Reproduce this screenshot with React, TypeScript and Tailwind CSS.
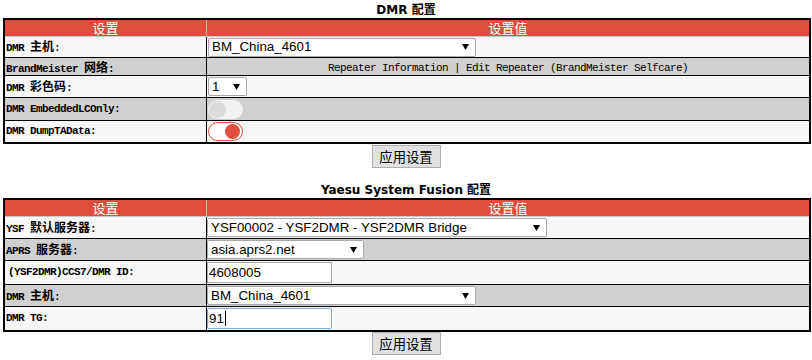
import type { ReactNode } from 'react';

const mono = "font-['Liberation_Mono','Noto_Sans_CJK_SC',monospace]";
const sans = "font-['Liberation_Sans','Noto_Sans_CJK_SC',sans-serif]";

function C({ children }: { children: ReactNode }) {
  return (
    <span className="font-['Noto_Sans_CJK_SC',sans-serif] text-[12px] tracking-normal">{children}</span>
  );
}

function Arrow() {
  return (
    <svg width="7" height="6" viewBox="0 0 7 6" className="shrink-0">
      <polygon points="0,0 7,0 3.5,6" fill="#000" />
    </svg>
  );
}

function Select({ value, className }: { value: string; className: string }) {
  return (
    <div
      className={`flex h-[19px] items-center justify-between rounded-[2px] border border-[#a9a9a9] bg-white pl-[3px] pr-[6px] ${sans} text-[13.33px] leading-none text-black ${className}`}
    >
      <span>{value}</span>
      <Arrow />
    </div>
  );
}

function TextInput({ value, focused }: { value: string; focused?: boolean }) {
  return (
    <div
      className={`flex h-[21px] w-[125px] items-center border bg-white px-[1px] ${sans} text-[13.33px] leading-none text-black ${
        focused ? 'rounded-[2px] border-[#7eaee6]' : 'border-[#a9a9a9]'
      }`}
    >
      <span>{value}</span>
      {focused && <span className="ml-[1px] h-[15px] w-px bg-black" />}
    </div>
  );
}

function Toggle({ on }: { on: boolean }) {
  return on ? (
    <div className="flex h-[19px] w-[35px] items-center justify-end rounded-full border border-[#df4e3c] bg-white pr-[2px]">
      <div className="h-[15px] w-[15px] rounded-full bg-[#df4e3c]" />
    </div>
  ) : (
    <div className="flex h-[19px] w-[35px] items-center rounded-full bg-[#f1f1f1] pl-[1px]">
      <div className="h-[17px] w-[17px] rounded-full bg-[#dcdcdc]" />
    </div>
  );
}

interface RowProps {
  label: ReactNode;
  children: ReactNode;
  h: string;
  dark?: boolean;
  last?: boolean;
}

function Row({ label, children, h, dark, last }: RowProps) {
  return (
    <div
      className={`grid grid-cols-[202px_1fr] ${h} ${dark ? 'bg-[#d0d0d0]' : 'bg-[#f7f7f7]'} ${
        last ? '' : 'border-b border-black'
      }`}
    >
      <div
        className={`flex items-center border-r border-black pl-[1px] ${mono} text-[11px] font-bold tracking-[-0.6px] text-black`}
      >
        {label}
      </div>
      <div className="flex items-center">{children}</div>
    </div>
  );
}

function Header() {
  return (
    <div className="grid h-[17px] grid-cols-[202px_1fr] border-b border-[#c8c8c8] bg-[#df4e3c] font-['Noto_Sans_CJK_SC',sans-serif] text-[13px] leading-[16px] text-white">
      <div className="border-r border-[#e2b0a8] text-center">设置</div>
      <div className="text-center">设置值</div>
    </div>
  );
}

function Title({ children }: { children: ReactNode }) {
  return (
    <div className="h-[16px] text-center font-['DejaVu_Sans','Noto_Sans_CJK_SC',sans-serif] text-[12px] font-bold leading-[16px] text-black">
      {children}
    </div>
  );
}

function ApplyButton() {
  return (
    <div className="flex justify-center">
      <button className="h-[23px] w-[69px] border border-[#adadad] bg-[#e1e1e1] font-['Noto_Sans_CJK_SC',sans-serif] text-[13.33px] leading-none text-black">
        应用设置
      </button>
    </div>
  );
}

export default function App() {
  return (
    <div className="h-[360px] w-[812px] overflow-hidden bg-white pt-[2px]">
      <Title>DMR 配置</Title>
      <div className="ml-[3px] w-[808px] border-2 border-black">
        <Header />
        <Row h="h-[21px]" label={<span>DMR <C>主机</C>:</span>}>
          <Select value="BM_China_4601" className="ml-[1px] w-[268px]" />
        </Row>
        <Row h="h-[18px]" dark label={<span>BrandMeister <C>网络</C>:</span>}>
          <div className={`w-full text-center ${mono} text-[11px] tracking-[-0.6px] text-black`}>
            Repeater Information | Edit Repeater (BrandMeister Selfcare)
          </div>
        </Row>
        <Row h="h-[22px]" label={<span>DMR <C>彩色码</C>:</span>}>
          <Select value="1" className="ml-[1px] w-[39px]" />
        </Row>
        <Row h="h-[23px]" dark label={<span>DMR EmbeddedLCOnly:</span>}>
          <div className="ml-[1px]">
            <Toggle on={false} />
          </div>
        </Row>
        <Row h="h-[21px]" last label={<span>DMR DumpTAData:</span>}>
          <div className="ml-[1px]">
            <Toggle on />
          </div>
        </Row>
      </div>
      <div className="mt-px">
        <ApplyButton />
      </div>

      <div className="mt-[14px]">
        <Title>Yaesu System Fusion 配置</Title>
      </div>
      <div className="ml-[3px] w-[808px] border-2 border-black">
        <Header />
        <Row h="h-[22px]" label={<span>YSF <C>默认服务器</C>:</span>}>
          <Select value="YSF00002 - YSF2DMR - YSF2DMR Bridge" className="w-[340px]" />
        </Row>
        <Row h="h-[22px]" dark label={<span>APRS <C>服务器</C>:</span>}>
          <Select value="asia.aprs2.net" className="w-[157px]" />
        </Row>
        <Row h="h-[24px]" label={<span className="pl-[2px]">(YSF2DMR)CCS7/DMR ID:</span>}>
          <TextInput value="4608005" />
        </Row>
        <Row h="h-[22px]" dark label={<span>DMR <C>主机</C>:</span>}>
          <Select value="BM_China_4601" className="w-[269px]" />
        </Row>
        <Row h="h-[23px]" last label={<span>DMR TG:</span>}>
          <TextInput value="91" focused />
        </Row>
      </div>
      <ApplyButton />
    </div>
  );
}
